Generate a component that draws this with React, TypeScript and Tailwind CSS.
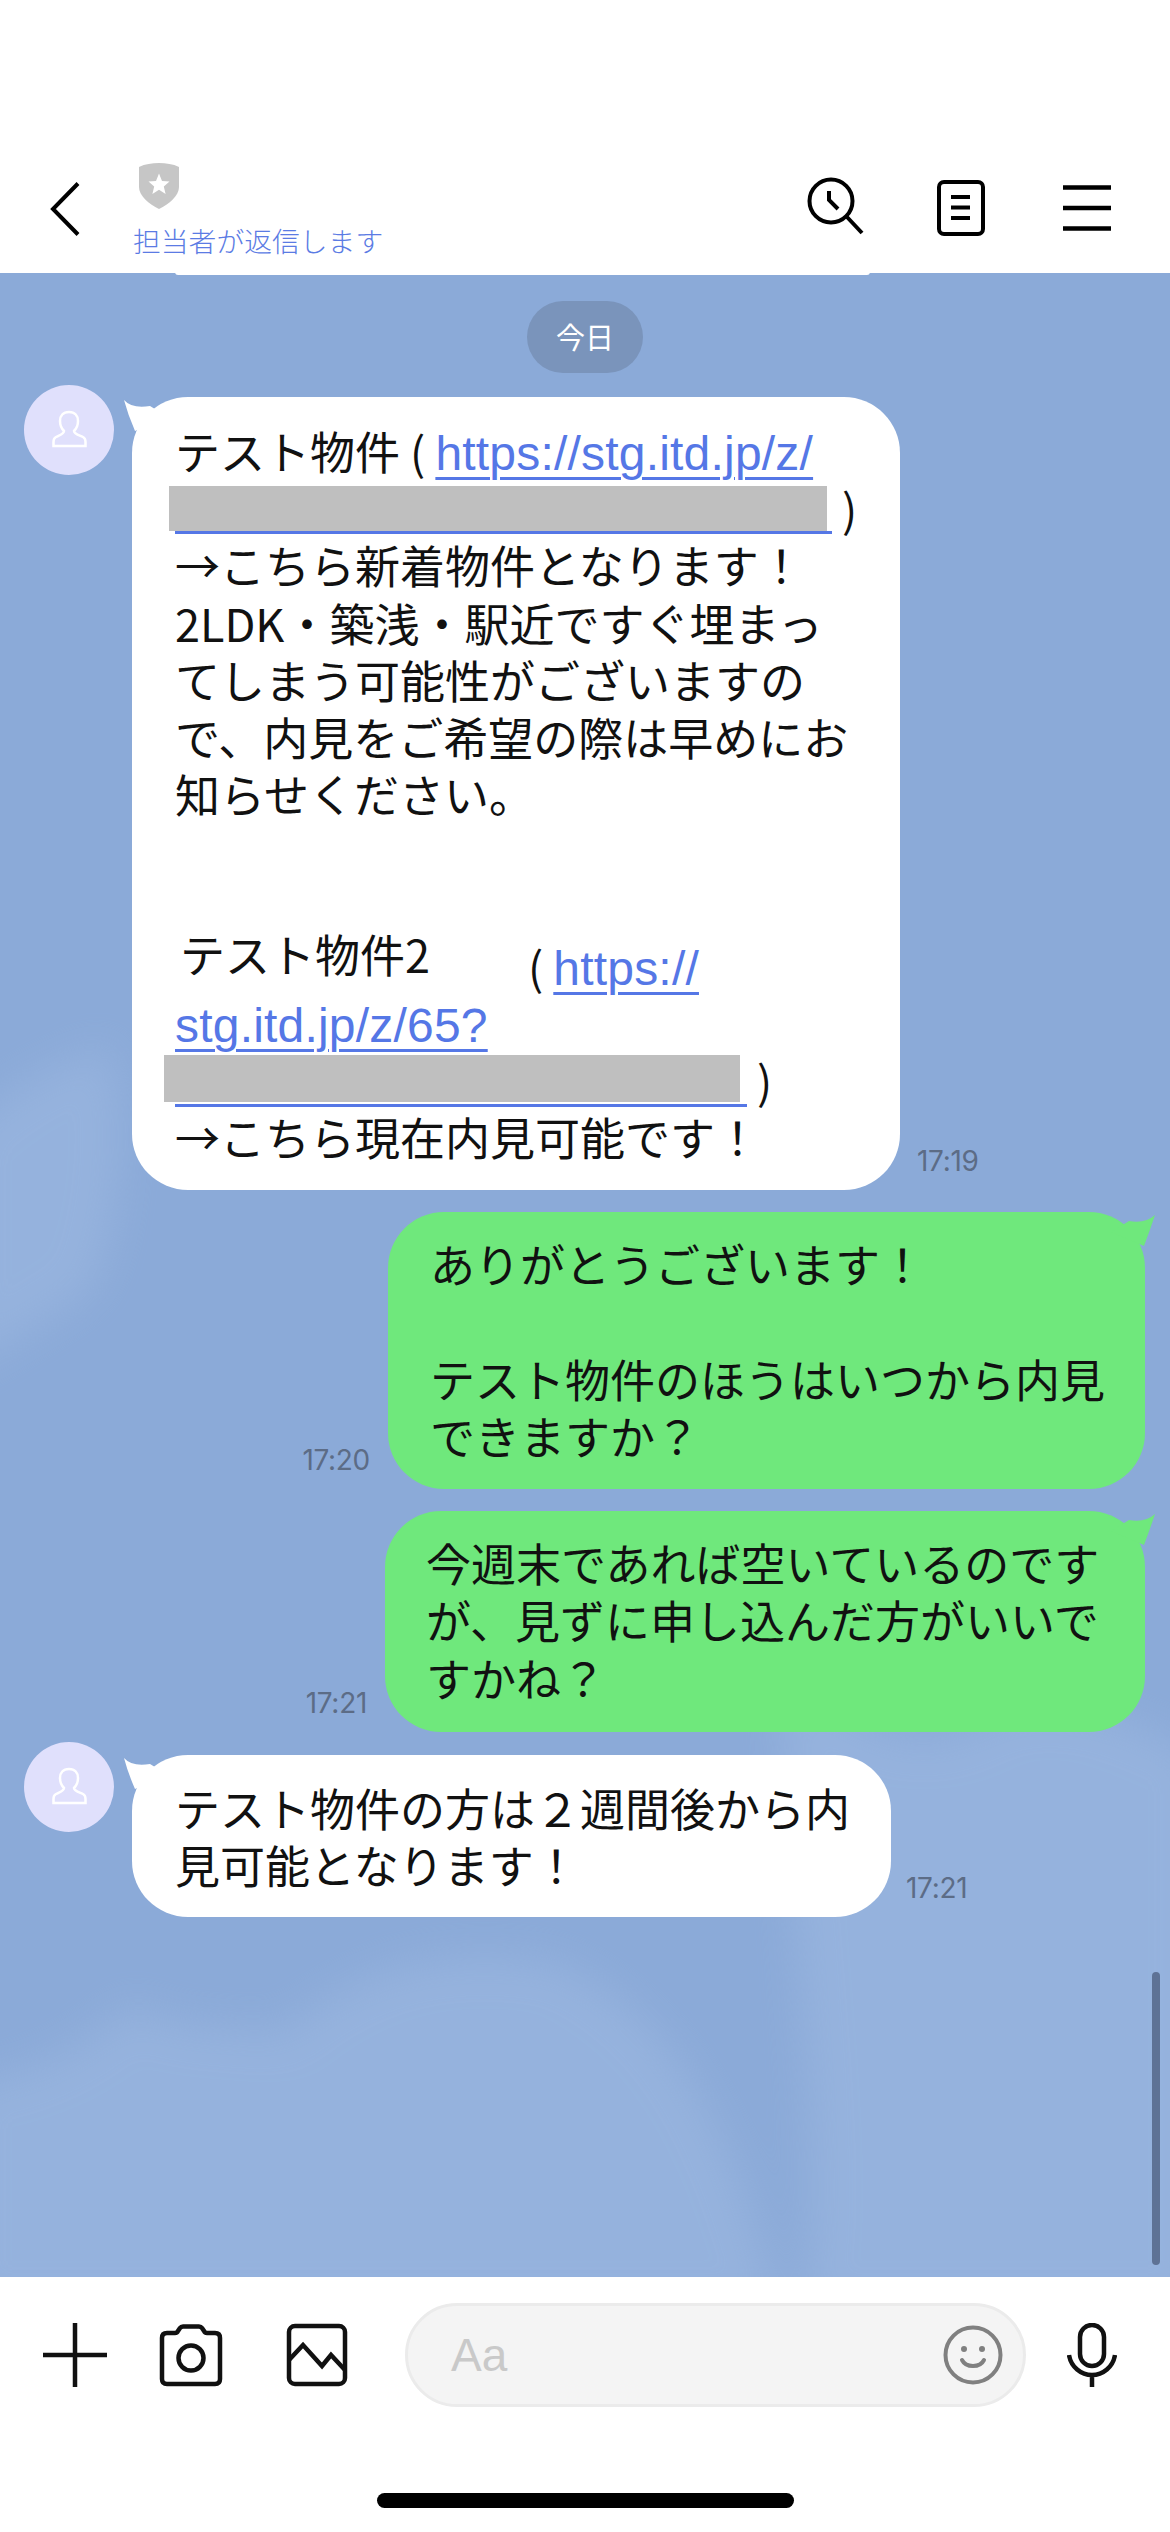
import React from "react";

const font = { fontFamily: '"Noto Sans CJK JP", "Noto Sans", sans-serif' };

function Avatar() {
  return (
    <div className="w-[90px] h-[90px] rounded-full bg-[#e0e0fc] shrink-0">
      <svg width="90" height="90" viewBox="0 0 90 90" fill="none" stroke="#fff" strokeWidth="2.5">
        <path d="M45 27C39 27 36 31 36 36C36 41 38 44 40 46C40 49 36 50 32 52C30 53 29.5 55 29.5 57V61H61.5V57C61.5 55 61 53 59 52C55 50 50 49 50 46C52 44 54 41 54 36C54 31 51 27 45 27Z" />
      </svg>
    </div>
  );
}

function TailLeft() {
  return (
    <svg className="absolute left-[-8px] top-0" width="44" height="40" viewBox="0 0 44 40" fill="#fff">
      <path d="M0 3Q8 12 26 9L44 20L11 34Q4 18 0 3Z" />
    </svg>
  );
}

function TailRight() {
  return (
    <svg className="absolute right-[-10px] top-0" width="44" height="40" viewBox="0 0 44 40" fill="#6fe87c">
      <path d="M44 3Q34 12 18 9L0 20L33 34Q39 18 44 3Z" />
    </svg>
  );
}

function Time({ children }: { children: React.ReactNode }) {
  return <div className="text-[28px] leading-[34px] text-[#5c6c86] font-['Inter'] tracking-[-0.3px] mb-[12px] shrink-0">{children}</div>;
}

function Line({ children, className = "" }: { children?: React.ReactNode; className?: string }) {
  return <div className={"h-[57.2px] leading-[57.2px] whitespace-nowrap " + className}>{children}</div>;
}

function Link({ children }: { children: React.ReactNode }) {
  return <span className="text-[#5577e6] underline decoration-[3px] underline-offset-[7px] text-[48px] tracking-[0.2px] font-['Liberation_Sans']">{children}</span>;
}

export default function App() {
  return (
    <div className="w-[1170px] h-[2532px] flex flex-col overflow-hidden bg-white text-[45px] text-[#111]" style={font}>
      {/* header */}
      <header className="h-[273px] shrink-0 pt-[163px] pl-[50px] pr-[59px] flex justify-between items-start bg-white">
        <div className="flex items-start">
          <svg className="mt-[19px]" width="30" height="54" viewBox="0 0 30 54" fill="none" stroke="#000" strokeWidth="4">
            <path d="M28 1.5L3 27L28 52.5" />
          </svg>
          <div className="ml-[53px] flex flex-col">
            <svg className="ml-[6px]" width="40" height="46" viewBox="0 0 40 46">
              <path d="M20 0C27 0 34 1 40 4V24C40 33 30 41 20 46C10 41 0 33 0 24V4C6 1 13 0 20 0Z" fill="#c6c6c6" />
              <path d="M20 10.5L23 18L30.5 18.5L24.8 23.4L26.6 31L20 26.8L13.4 31L15.2 23.4L9.5 18.5L17 18Z" fill="#fff" />
            </svg>
            <div className="mt-[13px] text-[27.8px] leading-[36px] text-[#5b7be4] whitespace-nowrap font-light">担当者が返信します</div>
          </div>
        </div>
        <div className="flex items-start">
          <svg className="mt-[13px]" width="60" height="60" viewBox="0 0 60 60" fill="none" stroke="#000" strokeWidth="4">
            <circle cx="24" cy="25" r="21.5" />
            <path d="M22 15V24L31 33" strokeWidth="4" />
            <path d="M40 41L55 57" />
          </svg>
          <svg className="ml-[70px] mt-[17px]" width="48" height="56" viewBox="0 0 48 56" fill="none" stroke="#000" strokeWidth="4">
            <rect x="2" y="2" width="44" height="52" rx="5" />
            <path d="M14 17H33M14 27.5H33M14 38H33" />
          </svg>
          <svg className="ml-[78px] mt-[22px]" width="48" height="46" viewBox="0 0 48 46" fill="none" stroke="#000" strokeWidth="4.5">
            <path d="M0 2.500H48M0 23H48M0 43.500H48" />
          </svg>
        </div>
      </header>

      {/* chat */}
      <main className="relative flex-1 bg-[#8baad8] overflow-hidden flex flex-col pt-[28px]">
        <svg className="absolute left-0 top-0" width="1170" height="2004" viewBox="0 0 1170 2004">
          <defs>
            <filter id="cloudBlur" x="-20%" y="-20%" width="140%" height="140%">
              <feGaussianBlur stdDeviation="22" />
            </filter>
          </defs>
          <g filter="url(#cloudBlur)" fill="#a3bde4" opacity="0.45">
            <path d="M-40 860C20 800 70 790 110 770C130 850 120 960 90 1020L-40 1100Z" />
            <path d="M-40 1810C40 1800 90 1770 130 1730C180 1760 220 1750 280 1760C360 1690 450 1670 560 1690C640 1730 720 1790 780 2040H-40Z" />
            <path d="M780 1400C860 1440 900 1500 1000 1440C1080 1420 1130 1450 1200 1480V2040H800C830 1900 790 1700 780 1400Z" />
          </g>
        </svg>
        <div className="absolute left-[175px] top-[-1px] w-[695px] h-[3px] rounded-b-[3px] bg-white" />
        <div className="absolute right-[10px] top-[1699px] w-[8px] h-[293px] rounded-full bg-[#5e7295]" />

        <div className="relative self-center w-[116px] h-[72px] rounded-full bg-[#7a94bb] flex items-center justify-center text-[29px] text-white">今日</div>

        {/* message 1 */}
        <div className="relative flex items-end mt-[12px] pl-[24px]">
          <div className="self-start"><Avatar /></div>
          <div className="relative ml-[18px] mt-[12px] w-[768px] rounded-[56px] bg-white pt-[25px] pb-[25px] pl-[43px]">
            <TailLeft />
            <Line>テスト物件 ( <Link>https://stg.itd.jp/z/</Link></Line>
            <Line className="relative">
              <span className="inline-block align-top h-[55px] w-[657px] border-b-[3px] border-[#5577e6]" />
              <span className="ml-[10px]">)</span>
              <span className="absolute left-[-6px] top-[7px] w-[658px] h-[45px] bg-[#bfbfbf]" />
            </Line>
            <Line>→こちら新着物件となります！</Line>
            <Line>2LDK・築浅・駅近ですぐ埋まっ</Line>
            <Line>てしまう可能性がございますの</Line>
            <Line>で、内見をご希望の際は早めにお</Line>
            <Line>知らせください。</Line>
            <Line />
            <Line />
            <Line>
              <span className="inline-block -translate-y-[12px] ml-[5px] w-[348px]">テスト物件2</span>( <Link>https://</Link>
            </Line>
            <Line><Link>stg.itd.jp/z/65?</Link></Line>
            <Line className="relative">
              <span className="inline-block align-top h-[56px] w-[572px] border-b-[3px] border-[#5577e6]" />
              <span className="ml-[10px]">)</span>
              <span className="absolute left-[-11px] top-[4px] w-[576px] h-[47px] bg-[#bfbfbf]" />
            </Line>
            <Line>→こちら現在内見可能です！</Line>
          </div>
          <div className="ml-[17px]"><Time>17:19</Time></div>
        </div>

        {/* my message 1 */}
        <div className="relative flex items-end justify-end mt-[22px] pr-[25px]">
          <div className="mr-[18px]"><Time>17:20</Time></div>
          <div className="relative w-[757px] rounded-[56px] bg-[#6fe87c] pt-[23px] pb-[25px] pl-[42px]">
            <TailRight />
            <Line>ありがとうございます！</Line>
            <Line />
            <Line>テスト物件のほうはいつから内見</Line>
            <Line>できますか？</Line>
          </div>
        </div>

        {/* my message 2 */}
        <div className="relative flex items-end justify-end mt-[22px] pr-[25px]">
          <div className="mr-[18px]"><Time>17:21</Time></div>
          <div className="relative w-[760px] rounded-[56px] bg-[#6fe87c] pt-[23px] pb-[26px] pl-[41px]">
            <TailRight />
            <Line>今週末であれば空いているのです</Line>
            <Line>が、見ずに申し込んだ方がいいで</Line>
            <Line>すかね？</Line>
          </div>
        </div>

        {/* message 2 */}
        <div className="relative flex items-end mt-[10px] pl-[24px]">
          <div className="self-start"><Avatar /></div>
          <div className="relative ml-[18px] mt-[13px] w-[759px] rounded-[56px] bg-white pt-[24px] pb-[24px] pl-[43px]">
            <TailLeft />
            <Line>テスト物件の方は２週間後から内</Line>
            <Line>見可能となります！</Line>
          </div>
          <div className="ml-[15px]"><Time>17:21</Time></div>
        </div>
      </main>

      {/* input */}
      <footer className="h-[255px] shrink-0 bg-white flex flex-col justify-between pt-[26px] pb-[24px]">
        <div className="flex items-center pl-[43px]">
          <svg width="64" height="64" viewBox="0 0 64 64" fill="none" stroke="#111" strokeWidth="4.500">
            <path d="M32 0V64M0 32H64" />
          </svg>
          <svg className="ml-[52px]" width="64" height="64" viewBox="0 0 64 64" fill="none" stroke="#111" strokeWidth="4.500">
            <path d="M8 10H16Q18 10 19 8L21 5Q22 3.500 24 3.500H40Q42 3.500 43 5L45 8Q46 10 48 10H56Q61 10 61 15V56Q61 61 56 61H8Q3 61 3 56V15Q3 10 8 10Z" />
            <circle cx="32" cy="35" r="12.500" />
          </svg>
          <svg className="ml-[63px]" width="62" height="64" viewBox="0 0 62 64" fill="none" stroke="#111" strokeWidth="4.500">
            <rect x="3" y="3" width="56" height="58" rx="6" />
            <path d="M3 37L17 22L36 43L45 32L59 47" />
          </svg>
          <div className="ml-[57px] w-[621px] h-[104px] rounded-full bg-[#f4f4f4] border-[3px] border-[#ebebeb] flex items-center justify-between pl-[43px] pr-[20px]">
            <span className="text-[46px] text-[#c9c9c9] font-['Liberation_Sans']">Aa</span>
            <svg width="60" height="60" viewBox="0 0 60 60" fill="none" stroke="#808080" strokeWidth="4">
              <circle cx="30" cy="30" r="27.500" />
              <circle cx="21" cy="24" r="3" fill="#808080" stroke="none" />
              <circle cx="39" cy="24" r="3" fill="#808080" stroke="none" />
              <path d="M19 35C23 43 37 43 41 35" strokeLinecap="round" />
            </svg>
          </div>
          <svg className="ml-[41px]" width="50" height="64" viewBox="0 0 50 64" fill="none" stroke="#111" strokeWidth="4.500">
            <rect x="13" y="2" width="24" height="41" rx="12" />
            <path d="M2 32C4 44 14 52 25 52C36 52 46 44 48 32M25 52V64" />
          </svg>
        </div>
        <div className="self-center ml-[1px] w-[417px] h-[15px] rounded-full bg-black" />
      </footer>
    </div>
  );
}
